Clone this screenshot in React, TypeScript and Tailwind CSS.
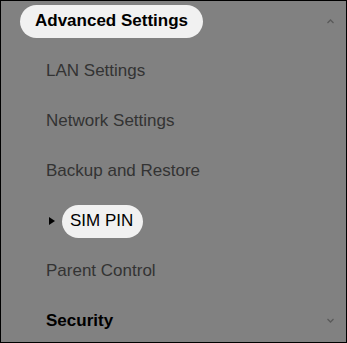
import React from 'react';

const items = [
  { label: 'LAN Settings' },
  { label: 'Network Settings' },
  { label: 'Backup and Restore' },
  { label: 'SIM PIN', active: true },
  { label: 'Parent Control' },
];

const Chevron = ({ up }: { up?: boolean }) => (
  <svg width="9" height="6" viewBox="0 0 9 6" className="text-[#5a5a5a]">
    <polyline
      points={up ? '1.5,5 4.5,2 7.5,5' : '1.5,1 4.5,4 7.5,1'}
      fill="none"
      stroke="currentColor"
      strokeWidth="1.3"
    />
  </svg>
);

export default function App() {
  return (
    <div
      className="w-[347px] h-[343px] overflow-hidden bg-[#818181] border border-black"
      style={{ fontFamily: '"Liberation Sans", Arial, sans-serif' }}
    >
      <div className="-mt-[5px]">
        <div className="h-[50px] flex items-center justify-between pl-[19px] pr-[11px]">
          <span className="bg-[#f1f1f1] rounded-full h-[33px] flex items-center px-[15px] text-[17px] font-bold text-black">
            Advanced Settings
          </span>
          <Chevron up />
        </div>

        {items.map(({ label, active }) => (
          <div key={label} className="h-[50px] flex items-center pl-[45px]">
            {active ? (
              <div className="flex items-center">
                <svg width="6" height="8" viewBox="0 0 6 8" className="ml-[3px] mr-[7px]">
                  <polygon points="0,0 6,4 0,8" fill="#000" />
                </svg>
                <span className="bg-[#f1f1f1] rounded-full h-[33px] flex items-center pl-[8px] pr-[10px] text-[17px] text-black">
                  {label}
                </span>
              </div>
            ) : (
              <span className="text-[17px] text-[#333]">{label}</span>
            )}
          </div>
        ))}

        <div className="h-[50px] flex items-center justify-between pl-[45px] pr-[11px]">
          <span className="text-[17px] font-bold text-black">Security</span>
          <Chevron />
        </div>
      </div>
    </div>
  );
}
